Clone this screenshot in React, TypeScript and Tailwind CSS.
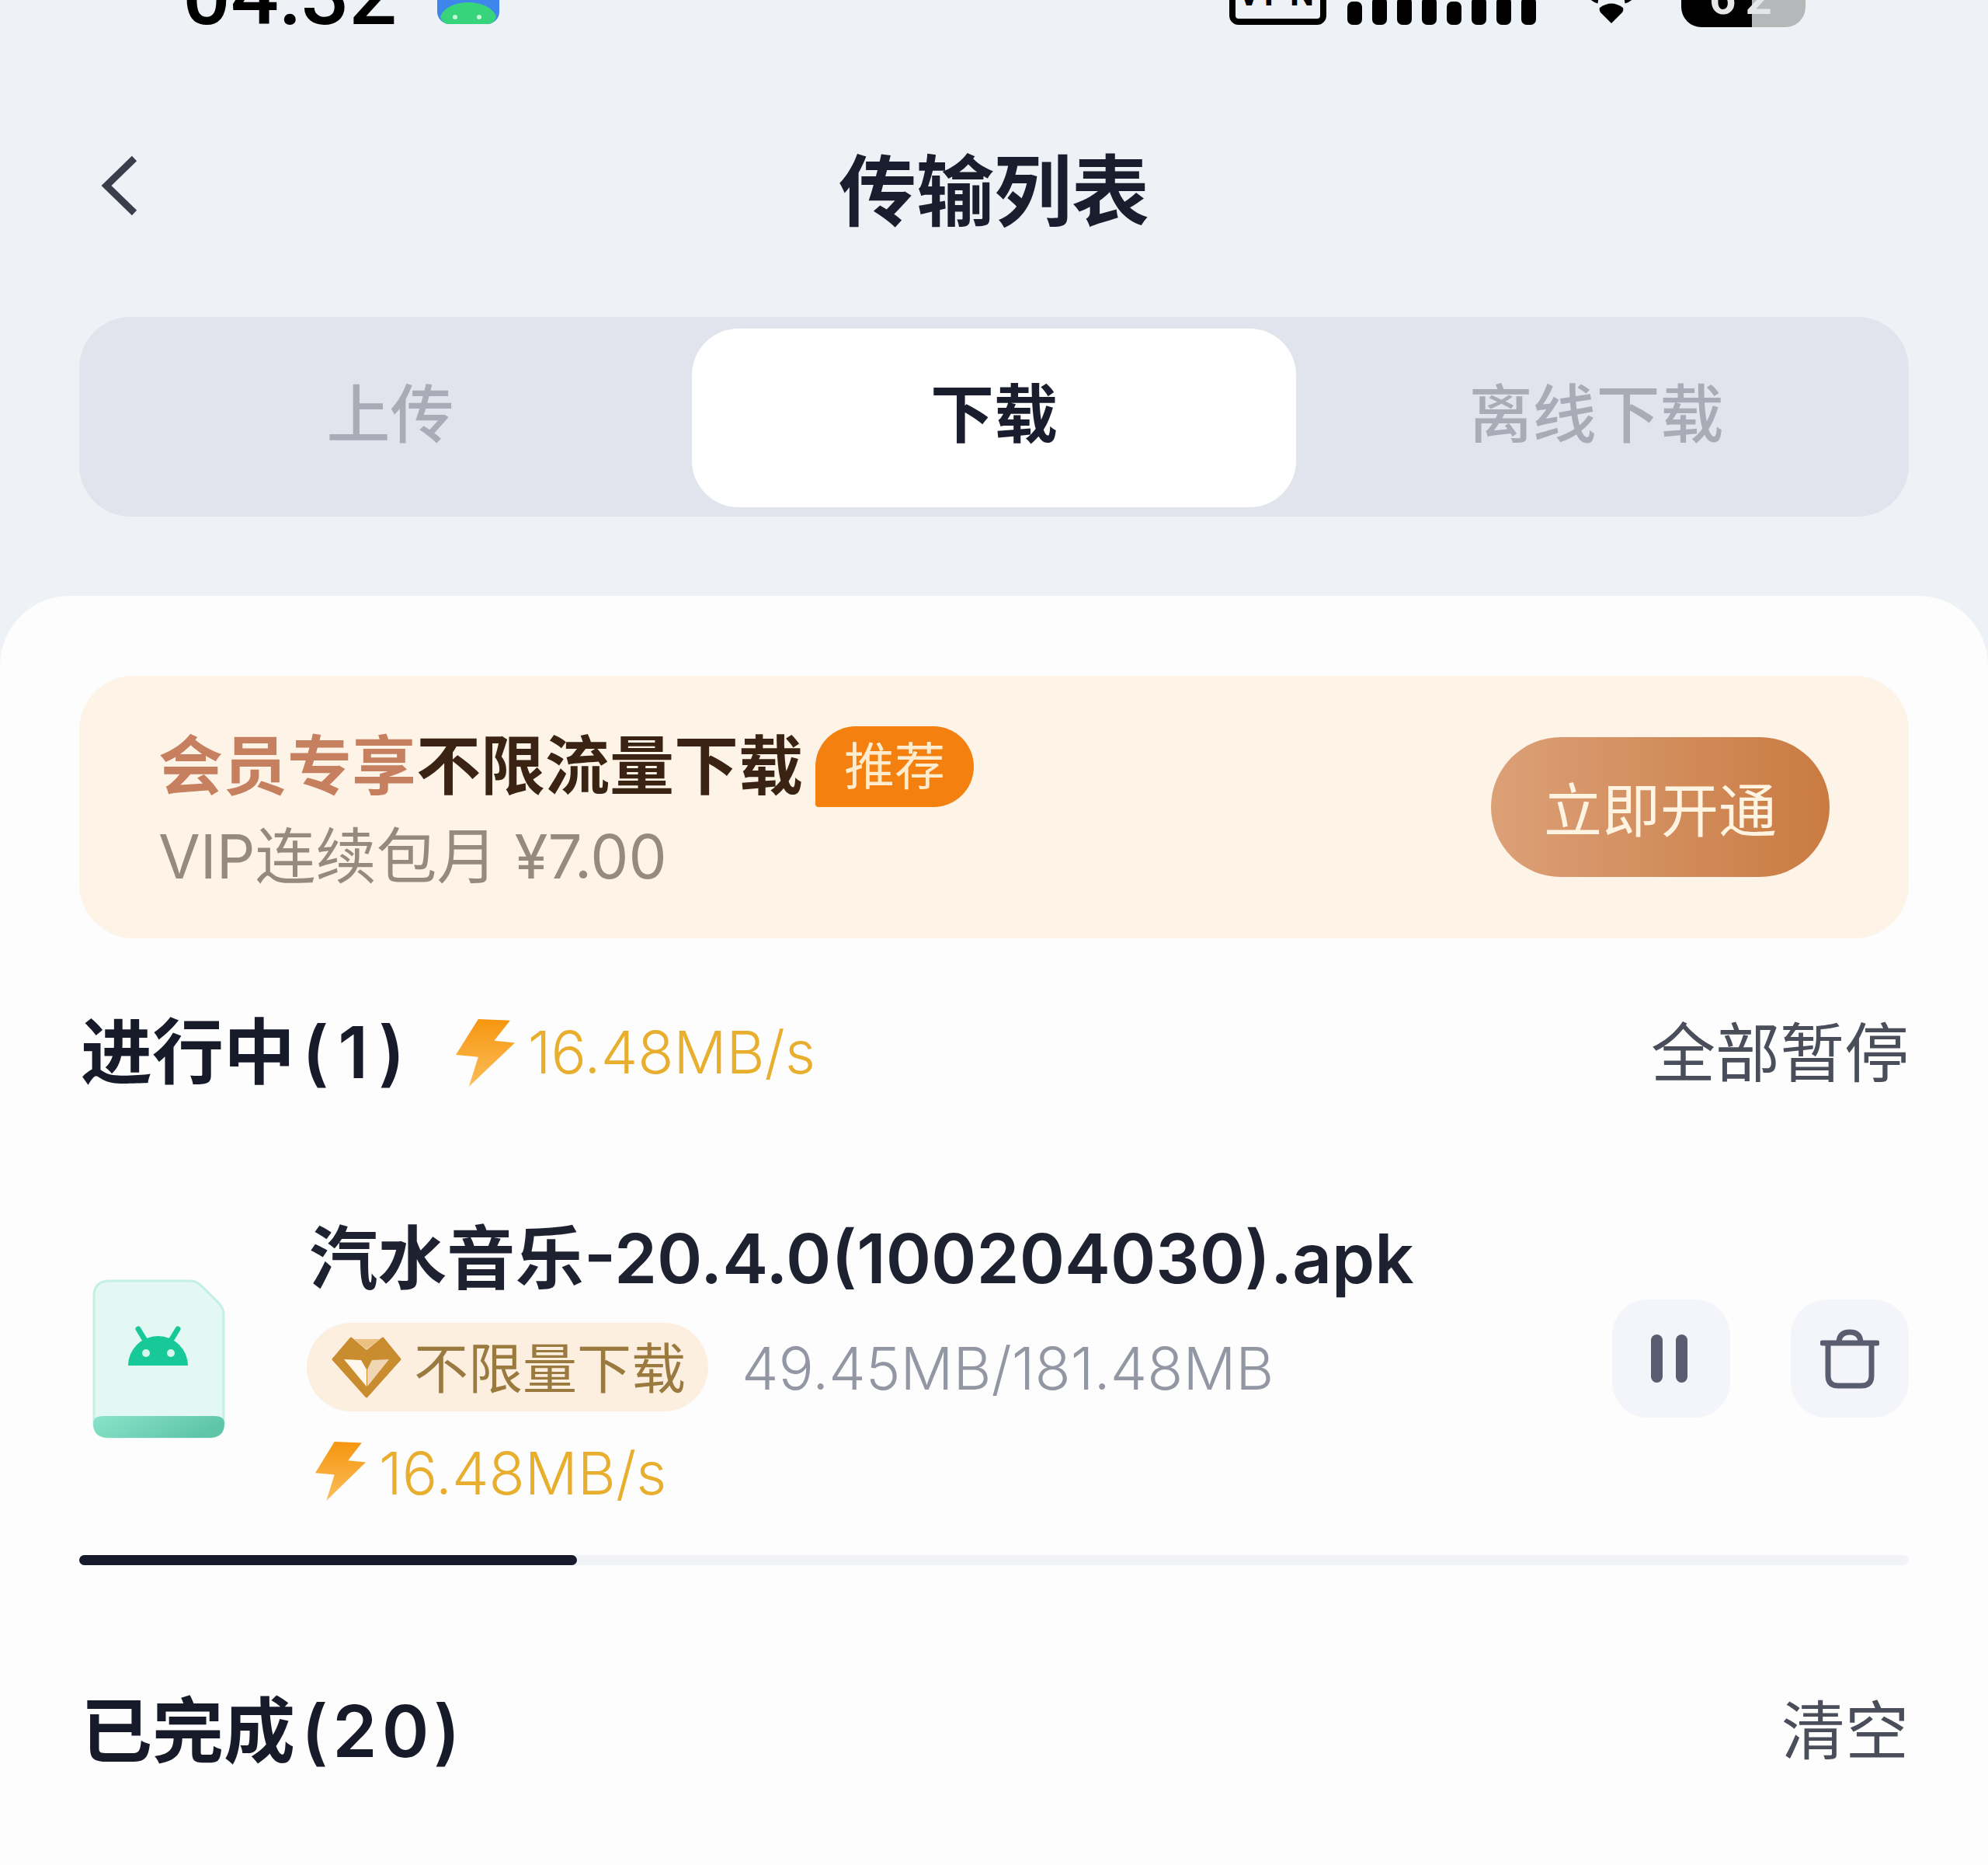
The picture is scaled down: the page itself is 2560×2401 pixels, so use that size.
const cjk = "font-['Inter','Noto_Sans_CJK_SC',sans-serif]";

function Bolt({ className, id }: { className: string; id: string }) {
  return (
    <svg viewBox="0 0 100 100" className={className} preserveAspectRatio="none">
      <defs>
        <linearGradient id={id} x1="0.5" y1="0" x2="0.5" y2="1">
          <stop offset="0" stopColor="#f6960f" />
          <stop offset="1" stopColor="#fbbd5a" />
        </linearGradient>
      </defs>
      <polygon points="38,0 92,2 65,32 100,35 22,100 38,56 0,53" fill={`url(#${id})`} />
    </svg>
  );
}

function StatusBar() {
  const bars = [30, 36, 36, 36, 30, 36, 36, 36];
  return (
    <div className="h-[36px] flex items-end overflow-hidden pl-[235px]">
      <span className="w-[328px] shrink-0 text-[109px] leading-none font-medium text-black font-['Roboto',sans-serif] mb-[-13px]">
        04:32
      </span>
      <svg viewBox="0 0 80 60" className="w-[80px] h-[60px] mb-[5px] shrink-0">
        <rect x="0" y="-20" width="80" height="80" rx="16" fill="#3f86ec" />
        <path d="M4 50C14 26 66 26 76 50q-2 10-12 10H16Q6 60 4 50z" fill="#38d47c" />
        <circle cx="23" cy="51" r="3" fill="#c9f7da" />
        <circle cx="54" cy="51" r="3" fill="#c9f7da" />
      </svg>
      <div className="ml-auto flex items-end mr-[235px]">
        <div className="w-[125px] h-[70px] mb-[4px] border-[8px] border-black rounded-[12px] flex items-end justify-center shrink-0">
          <span className="text-[44px] leading-none font-bold tracking-[5px] text-black font-['Roboto',sans-serif] mb-[10px]">VPN</span>
        </div>
        <div className="ml-[27px] mb-[4px] flex items-end gap-[13px]">
          {bars.map((h, i) => (
            <div key={i} className="w-[19px] bg-black rounded-[7px]" style={{ height: h }} />
          ))}
        </div>
        <svg viewBox="0 0 66 36" className="ml-[64px] w-[66px] h-[36px] mb-[6px] shrink-0">
          <path d="M2 -4q8 10 14 11M64 -4q-8 10-14 11" stroke="#000" strokeWidth="7" fill="none" />
          <path d="M18 16q15-11 30 0q1 3-1 6L33 36 19 22q-2-3-1-6z" fill="#000" />
        </svg>
        <div className="ml-[57px] w-[160px] h-[60px] mb-[1px] rounded-[26px] bg-[linear-gradient(90deg,#000_57%,#b5b8b9_57%)] flex items-end pl-[36px] shrink-0">
          <span className="text-[60px] leading-none font-bold tracking-[12px] text-[#e4e6e8] font-['Roboto',sans-serif] mb-[7px]">62</span>
        </div>
      </div>
    </div>
  );
}

function FileIcon() {
  return (
    <svg viewBox="0 0 171 205" className="w-[171px] h-[205px] shrink-0">
      <defs>
        <linearGradient id="band" x1="0" y1="0" x2="1" y2="0.3">
          <stop offset="0" stopColor="#8ae4c9" />
          <stop offset="1" stopColor="#5fc5aa" />
        </linearGradient>
      </defs>
      <path
        d="M22 2h104q8 0 14 6l24 24q5 6 5 14v137q0 20-20 20H22Q2 203 2 183V22Q2 2 22 2z"
        fill="#e3f8f3"
        stroke="#c4efe4"
        strokeWidth="3"
      />
      <path d="M1 186q0-10 12-10h145q12 0 12 10q0 18-20 18H21Q1 204 1 186z" fill="url(#band)" />
      <path d="M46 111a38.500 38 0 0 1 77 0z" fill="#17c998" />
      <path d="M59 64l11 18M110 64L99 82" stroke="#17c998" strokeWidth="7" strokeLinecap="round" />
      <circle cx="69" cy="95" r="5" fill="#d6f7ec" />
      <circle cx="101" cy="95" r="5" fill="#d6f7ec" />
    </svg>
  );
}

function VipIcon() {
  return (
    <svg viewBox="-2 -2 90 79" className="w-[90px] h-[79px] shrink-0">
      <polygon
        points="0,27 23,0 43,17 64,0 86,27 43,75"
        fill="#c98c2e"
        stroke="#c98c2e"
        strokeWidth="3"
        strokeLinejoin="round"
      />
      <polygon points="27,1 43,14 60,1" fill="#ecc07f" />
      <polygon points="14,27 36,28 43,40 43,62" fill="#fff7ec" />
      <polygon points="72,27 50,28 44,40 44,62" fill="#f0d6b4" />
    </svg>
  );
}

export default function App() {
  return (
    <div className={`w-[2560px] h-[2401px] overflow-hidden bg-[#eef1f6] flex flex-col ${cjk}`}>
      <StatusBar />

      {/* Header */}
      <div className="mt-[161px] h-[100px] grid grid-cols-[1fr_auto_1fr] items-center pl-[130px]">
        <svg viewBox="0 0 48 78" className="w-[48px] h-[78px] mb-[16px]">
          <path d="M43 4 7 39l36 35" fill="none" stroke="#3a3d4c" strokeWidth="9" />
        </svg>
        <h1 className="text-[100px] leading-none font-semibold text-[#1a1d2e] mr-[130px]">传输列表</h1>
        <div />
      </div>

      {/* Tabs */}
      <div className="mt-[111px] mx-[102px] h-[257px] rounded-[66px] bg-[#e1e4ec] pt-[15px] pb-[12px] flex text-[82px] leading-none">
        <div className="w-[789px] flex items-center justify-center pb-[8px] pl-[12px] text-[#a9acb6] font-medium">上传</div>
        <div className="w-[778px] bg-white rounded-[60px] flex items-center justify-center pb-[8px] text-[#1a1d2e] font-semibold">下载</div>
        <div className="flex-1 flex items-center justify-center pb-[8px] pr-[16px] text-[#a9acb6] font-medium">离线下载</div>
      </div>

      {/* Sheet */}
      <div className="mt-[102px] flex-1 bg-[#fdfdfe] rounded-t-[90px] pt-[103px] px-[102px]">
        <div className="h-[338px] rounded-[70px] bg-[#fdf3e7] flex items-center justify-between pl-[102px] pr-[102px]">
          <div className="flex flex-col pt-[5px]">
            <div className="flex items-center h-[104px]">
              <span className="text-[83px] leading-none font-bold text-[#c7805f]">会员专享</span>
              <span className="text-[83px] leading-none font-bold text-[#3b2313]">不限流量下载</span>
              <span className="ml-[16px] w-[204px] h-[104px] bg-[#f3800f] rounded-[52px] rounded-bl-[4px] flex items-center justify-center text-[65px] leading-none text-[#ffeccf]">
                推荐
              </span>
            </div>
            <span className="mt-[18px] text-[78px] leading-[92px] text-[#968a7c]">VIP连续包月 ¥7.00</span>
          </div>
          <div className="w-[436px] h-[180px] pt-[8px] rounded-full bg-gradient-to-r from-[#dca077] to-[#c97b41] flex items-center justify-center text-[75px] leading-none text-[#fff4e2]">
            立即开通
          </div>
        </div>

        <div className="mt-[97px] h-[100px] flex items-center">
          <span className="ml-[2px] text-[92px] leading-none font-semibold text-[#171a28]">
            进行中<span className="ml-[9px] tracking-[12px]">(1)</span>
          </span>
          <Bolt id="b1" className="ml-[53px] w-[76px] h-[87px]" />
          <span className="ml-[17px] text-[75.600px] leading-none font-light text-[#e8ae2e]">16.48MB/s</span>
          <span className="ml-auto pt-[3px] text-[83px] leading-none text-[#4a4d5a]">全部暂停</span>
        </div>

        <div className="mt-[165px] flex items-start">
          <div className="ml-[17px] mt-[77px]">
            <FileIcon />
          </div>
          <div className="ml-[108px] flex flex-col items-start">
            <div className="h-[100px] flex items-center text-[88.500px] leading-none font-semibold text-[#1e2130]">
              汽水音乐-20.4.0(100204030).apk
            </div>
            <div className="mt-[33px] flex items-center">
              <div className="-ml-[3px] w-[517px] h-[114px] rounded-full bg-[#fcefe0] flex items-center pl-[32px]">
                <VipIcon />
                <span className="ml-[16px] pt-[6px] text-[70px] leading-none text-[#9a7a3f]">不限量下载</span>
              </div>
              <span className="ml-[43px] pt-[4px] text-[75.500px] leading-none font-light text-[#9396a3]">49.45MB/181.48MB</span>
            </div>
            <div className="mt-[39px] h-[76px] flex items-center">
              <Bolt id="b2" className="ml-[8px] w-[65px] h-[76px]" />
              <span className="ml-[17px] pt-[6px] text-[75.600px] leading-none font-light text-[#e8ae2e]">16.48MB/s</span>
            </div>
          </div>
          <div className="ml-auto mt-[103px] flex gap-[78px]">
            <div className="w-[152px] h-[152px] rounded-[46px] bg-[#f3f5fb] flex items-center justify-center gap-[17px] pr-[6px]">
              <div className="w-[15px] h-[62px] rounded-full bg-[#5a5d70]" />
              <div className="w-[15px] h-[62px] rounded-full bg-[#5a5d70]" />
            </div>
            <div className="w-[152px] h-[152px] rounded-[46px] bg-[#f3f5fb] flex items-center justify-center">
              <svg viewBox="0 0 76 78" className="w-[76px] h-[78px]" fill="none" stroke="#5a5d70" strokeWidth="7">
                <path d="M3 19h70" strokeLinecap="round" />
                <path d="M10 19v42q0 13 13 13h30q13 0 13-13V19" />
                <path d="M24 19q0-14 14-14t14 14" />
              </svg>
            </div>
          </div>
        </div>

        <div className="mt-[70px] h-[13px] rounded-full bg-[#f2f3f7]">
          <div className="h-full rounded-full bg-[#171a2b]" style={{ width: "27.2%" }} />
        </div>

        <div className="mt-[164px] h-[100px] flex items-center justify-between">
          <span className="ml-[2px] text-[92px] leading-none font-semibold text-[#171a28]">
            已完成<span className="ml-[8px] tracking-[6px]">(20)</span>
          </span>
          <span className="text-[82px] leading-none text-[#4a4d5a]">清空</span>
        </div>
      </div>
    </div>
  );
}
